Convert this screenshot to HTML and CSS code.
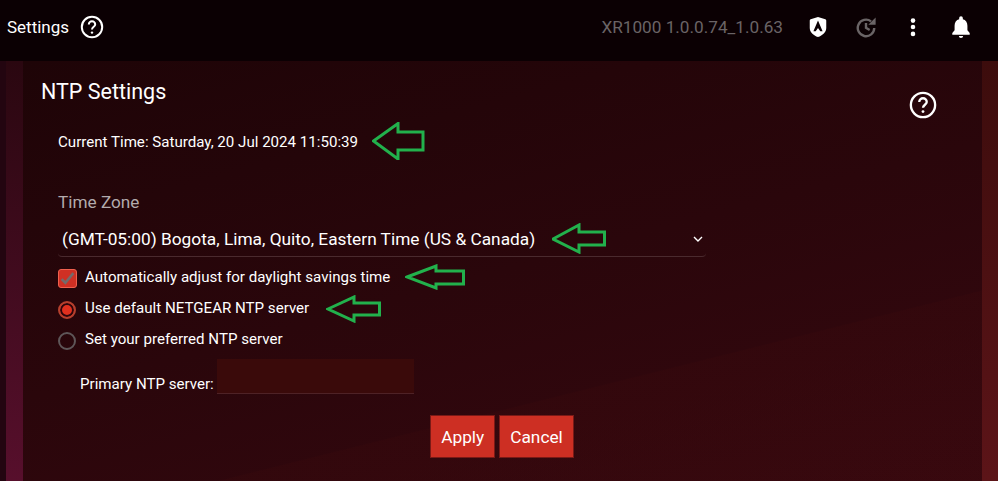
FILE: index.html
```html
<!DOCTYPE html>
<html lang="en">
<head>
    <meta charset="UTF-8">
    <meta name="viewport" content="width=device-width, initial-scale=1.0">
    <title>NTP Settings</title>
    <link rel="stylesheet" href="styles.css">
</head>
<body>

    <header class="topbar">
        <div class="topbar-left">
            <span class="topbar-title">Settings</span>
            <svg class="help-icon small" viewBox="0 0 24 24"><circle cx="12" cy="12" r="10.2"/><path d="M8.8 9.4a3.2 3.2 0 0 1 6.4 0c0 2.3-3.2 2.5-3.2 5"/><circle class="dot" cx="12" cy="17.6" r="1.2"/></svg>
        </div>
        <div class="topbar-right">
            <span class="firmware">XR1000 1.0.0.74_1.0.63</span>
            <svg class="bar-icon" viewBox="0 0 20 24"><path class="fill-white" fill-rule="evenodd" d="M2 3.500 10 1l8 2.500c.6.2 1 .7 1 1.300V13c0 4.500-4 8-9 10C5 21 1 17.500 1 13V4.800c0-.6.4-1.100 1-1.300ZM10 5 5 16.500h2.500L10 13l2.500 3.500H15Z"/></svg>
            <svg class="bar-icon clock" viewBox="0 0 24 24"><path class="stroke-grey" d="M21 13a9 9 0 1 1-3.500-7.100M12 7.500v5.500l4 2.200"/><path class="fill-grey" d="M22.500 1.500v8h-8Z"/></svg>
            <svg class="bar-icon" viewBox="0 0 24 24"><circle class="fill-white" cx="12" cy="5" r="2.500"/><circle class="fill-white" cx="12" cy="12" r="2.500"/><circle class="fill-white" cx="12" cy="19.500" r="2.500"/></svg>
            <svg class="bar-icon" viewBox="0 0 24 24"><path class="fill-white" d="M12 24c1.300 0 2.300-.9 2.300-2.200H9.700C9.700 23.100 10.700 24 12 24Zm9.500-5.500-2.500-3V10.500c0-3.400-1.800-6.200-5-7V2.300a2 2 0 0 0-4 0v1.200c-3.200.8-5 3.600-5 7v5l-2.500 3v2h19Z"/></svg>
        </div>
    </header>

    <main class="page">
        <div class="side side-left"></div>
        <section class="panel">
            <div class="panel-head">
                <h2>NTP Settings</h2>
                <svg class="help-icon" viewBox="0 0 24 24"><circle cx="12" cy="12" r="10.400"/><path d="M8.800 9.400a3.200 3.200 0 0 1 6.400 0c0 2.300-3.200 2.500-3.200 5"/><circle class="dot" cx="12" cy="17.600" r="1.200"/></svg>
            </div>

            <p class="current-time">Current Time: Saturday, 20 Jul 2024 11:50:39</p>

            <div class="field">
                <label class="field-label">Time Zone</label>
                <div class="select">
                    <span>(GMT-05:00) Bogota, Lima, Quito, Eastern Time (US &amp; Canada)</span>
                    <svg class="chevron" viewBox="0 0 10 6"><path d="M1 1l4 4 4-4"/></svg>
                </div>
            </div>

            <div class="option first">
                <span class="checkbox"><svg viewBox="0 0 16 16"><path d="M2.500 8.500l3.500 3.500 7.500-9"/></svg></span>
                <span>Automatically adjust for daylight savings time</span>
            </div>
            <div class="option">
                <span class="radio checked"></span>
                <span>Use default NETGEAR NTP server</span>
            </div>
            <div class="option">
                <span class="radio"></span>
                <span>Set your preferred NTP server</span>
            </div>

            <div class="server-row">
                <span class="server-label">Primary NTP server:</span>
                <div class="server-input"></div>
            </div>

            <div class="buttons">
                <button>Apply</button>
                <button>Cancel</button>
            </div>
        </section>
        <div class="side side-right"></div>

        <!-- green arrows drawn on top of the screenshot -->
        <svg class="arrow arrow-time" viewBox="0 0 54 38"><path d="M1.500 19 26 1.500V10h25v18H26v9Z"/></svg>
        <svg class="arrow arrow-zone" viewBox="0 0 56 31"><path d="M1 16 27 2v7h25.500v13H27v7Z"/></svg>
        <svg class="arrow arrow-dst" viewBox="0 0 62 26"><path d="M2 13 31 2v5h27.500v13H31v4Z"/></svg>
        <svg class="arrow arrow-ntp" viewBox="0 0 57 28"><path d="M2 14 28 2v6h25.500v12H28v6Z"/></svg>
    </main>

</body>
</html>
```

FILE: styles.css
```css
* {
    box-sizing: border-box;
}
html, body {
    height: 100%;
}
body {
    font-family: Roboto, "Liberation Sans", sans-serif;
    background-color: #0c0003;
    color: #fff;
    margin: 0;
    overflow: hidden;
}

/* top bar */
.topbar {
    height: 61px;
    background-color: #0b0003;
    display: flex;
    justify-content: space-between;
    align-items: center;
    padding: 0 26px 7px 7px;
}
.topbar-left {
    display: flex;
    align-items: center;
    gap: 11px;
}
.topbar-title {
    font-size: 17px;
}
.topbar-right {
    display: flex;
    align-items: center;
}
.firmware {
    font-size: 17.200px;
    color: #6a6466;
    margin-right: 24px;
}
.bar-icon {
    width: 22px;
    height: 22px;
    margin-right: 26px;
}
.bar-icon.clock {
    margin-right: 25px;
}
.bar-icon:last-child {
    margin-right: 0;
}
.fill-white {
    fill: #fff;
}
.fill-grey {
    fill: #6a6466;
}
.stroke-grey {
    fill: none;
    stroke: #6a6466;
    stroke-width: 2.600;
}
.help-icon {
    width: 28px;
    height: 28px;
    margin-top: 12px;
    fill: none;
    stroke: #fff;
    stroke-width: 2;
}
.help-icon.small {
    width: 24px;
    height: 24px;
    margin-top: 0;
}
.help-icon .dot {
    fill: #fff;
    stroke: none;
}

/* page */
.page {
    position: relative;
    height: 420px;
    display: flex;
}
.side {
    flex: none;
}
.side-left {
    width: 23px;
    border-left: 6px solid #230510;
    background: linear-gradient(180deg, #2a0710 0, #570f2c 100%);
}
.side-right {
    width: 16px;
    background: linear-gradient(180deg, #3c0c0c 0, #5c1418 100%);
}
.panel {
    flex: 1;
    padding: 0 0 0 18px;
    background:
        linear-gradient(166deg, transparent 0, transparent 71%, rgba(70, 12, 12, 0.16) 71.200%, rgba(70, 12, 12, 0.16) 100%),
        linear-gradient(165deg, #1e0407 0, #2a060b 50%, #36080f 100%);
}
.panel-head {
    display: flex;
    justify-content: space-between;
    padding: 18px 45px 0 0;
    height: 69px;
}
.panel-head h2 {
    font-size: 21.500px;
    font-weight: 400;
    margin: 0;
}
.current-time {
    font-size: 15.100px;
    margin: 3px 0 0 17px;
}
.field {
    margin: 41px 0 0 17px;
    width: 648px;
}
.field-label {
    display: block;
    font-size: 17.200px;
    color: #b3abad;
}
.select {
    display: flex;
    justify-content: space-between;
    align-items: center;
    height: 36px;
    margin-top: 9px;
    padding: 0 3px 0 4px;
    font-size: 17.300px;
    border-bottom: 1px solid #4a2a2e;
    border-radius: 0 0 4px 4px;
}
.chevron {
    width: 10px;
    height: 6px;
    fill: none;
    stroke: #fff;
    stroke-width: 1.400;
}
.option {
    display: flex;
    align-items: center;
    gap: 8px;
    height: 31px;
    margin-left: 17px;
    font-size: 15.100px;
}
.option.first {
    margin-top: 4px;
}
.checkbox {
    flex: none;
    width: 19px;
    height: 19px;
    margin-top: 3px;
    background-color: #cf3024;
    border: 1px solid #f0604e;
    border-radius: 3px;
    display: flex;
}
.checkbox svg {
    width: 17px;
    height: 17px;
    fill: none;
    stroke: #756a6a;
    stroke-width: 2.400;
}
.radio {
    flex: none;
    width: 18px;
    height: 18px;
    margin: 5px 1px 0 0;
    border: 2px solid #5e5658;
    border-radius: 50%;
}
.radio.checked {
    border-color: #b5402e;
    background-color: #e0301e;
    box-shadow: inset 0 0 0 2px #2c060c;
}
.server-row {
    display: flex;
    align-items: flex-end;
    gap: 3px;
    margin: 5px 0 0 39px;
    font-size: 15.100px;
}
.server-label {
    margin-bottom: 1px;
}
.server-input {
    width: 197px;
    height: 35px;
    background-color: #3a0a0a;
    border-bottom: 1px solid #4e2226;
}
.buttons {
    display: flex;
    justify-content: center;
    gap: 4px;
    margin: 21px 0 0 52px;
    width: 818px;
}
button {
    height: 43px;
    padding: 0 10px;
    background-color: #cd2f23;
    color: #fff;
    border: 1px solid #7a1a16;
    font-family: inherit;
    font-size: 17.300px;
}

/* annotation arrows */
.arrow {
    position: absolute;
    fill: none;
    stroke: #22b14c;
    stroke-width: 3;
}
.arrow-time {
    left: 372px;
    top: 61px;
    width: 54px;
    height: 38px;
}
.arrow-zone {
    left: 552px;
    top: 162px;
    width: 56px;
    height: 31px;
}
.arrow-dst {
    left: 405px;
    top: 203px;
    width: 62px;
    height: 26px;
}
.arrow-ntp {
    left: 326px;
    top: 234px;
    width: 57px;
    height: 28px;
}
```
